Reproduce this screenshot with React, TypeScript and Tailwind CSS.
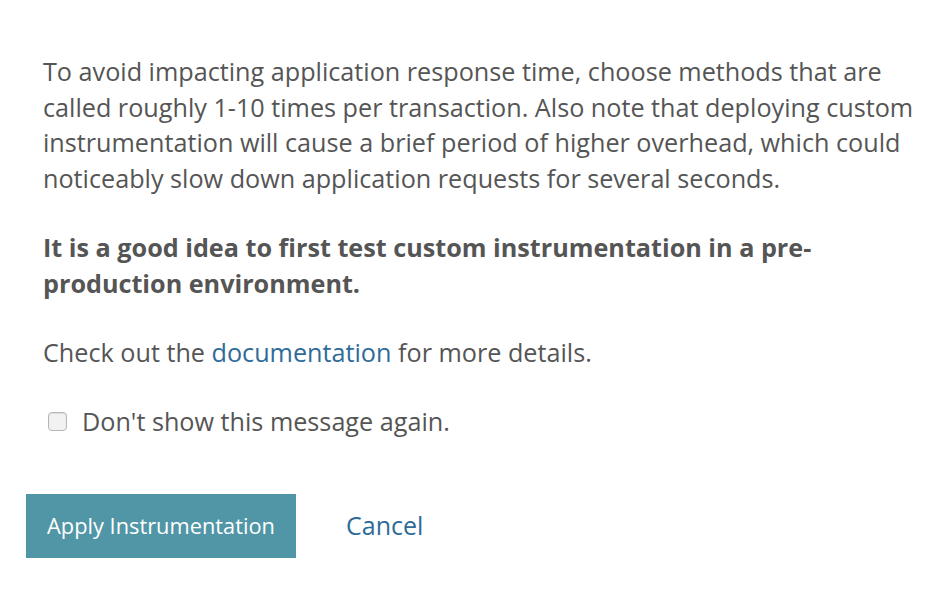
export default function App() {
  return (
    <div
      className="min-h-[598px] w-[942px] bg-white pt-[54px] pl-[43px] text-[#555]"
      style={{ fontFamily: '"Open Sans", sans-serif' }}
    >
      <div className="w-[880px] text-[25.2px] leading-[35.5px]">
        <p>
          To avoid impacting application response time, choose methods that are
          called roughly 1-10 times per transaction. Also note that deploying
          custom instrumentation will cause a brief period of higher overhead,
          which could noticeably slow down application requests for several
          seconds.
        </p>
        <p className="mt-[34px] w-[800px] font-bold">
          It is a good idea to first test custom instrumentation in a
          pre-production environment.
        </p>
        <p className="mt-[34px]">
          Check out the{" "}
          <a href="#" className="text-[#2e6b99]">
            documentation
          </a>{" "}
          for more details.
        </p>
        <label className="mt-[33px] flex items-center gap-[15px] pl-[5px]">
          <input
            type="checkbox"
            className="h-[19px] w-[19px] appearance-none rounded-[4px] border border-[#b5b5b5] bg-[#f2f2f2] shadow-[inset_0_1px_1px_rgba(0,0,0,0.08)]"
          />
          <span>Don't show this message again.</span>
        </label>
      </div>
      <div className="-ml-[17px] mt-[55px] flex items-center gap-[50px]">
        <button
          type="button"
          className="h-[64px] w-[270px] bg-[#5096a6] text-[21.8px] text-white"
        >
          Apply Instrumentation
        </button>
        <a href="#" className="text-[25px] text-[#2e6b99]">
          Cancel
        </a>
      </div>
    </div>
  );
}
